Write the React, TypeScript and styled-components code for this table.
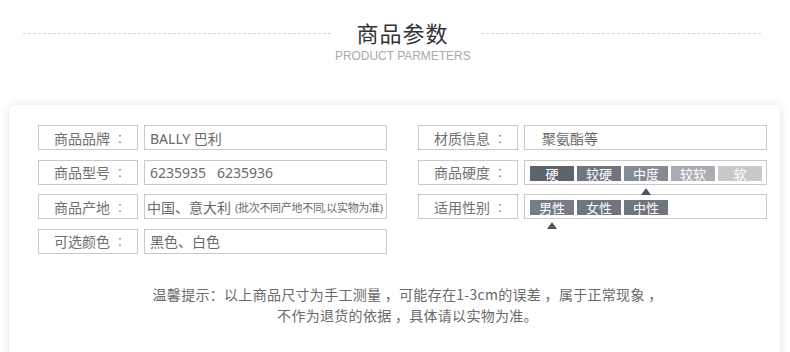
import styled, { createGlobalStyle } from "styled-components";

const GlobalStyle = createGlobalStyle`
  body {
    margin: 0;
    background: #ffffff;
    font-family: "Noto Sans", "Noto Sans CJK SC", sans-serif;
    color: #666;
  }
`;

const Page = styled.div`
  width: 790px;
  height: 352px;
  overflow: hidden;
  padding-top: 19px;
  box-sizing: border-box;
`;

const Header = styled.header`
  display: grid;
  grid-template-columns: 308px 150px 280px;
  margin-left: 23px;
  align-items: start;
`;

const Rule = styled.div`
  margin-top: 14px;
  border-top: 1px dashed #d4d4d4;
`;

const TitleBlock = styled.div`
  display: flex;
  flex-direction: column;
  align-items: center;
  margin-left: -7px;
`;

const Title = styled.h2`
  margin: 0;
  font-family: "Noto Sans CJK SC", sans-serif;
  font-weight: 400;
  font-size: 22px;
  line-height: 26px;
  letter-spacing: 1px;
  color: #333;
`;

const Subtitle = styled.div`
  margin-top: 3px;
  font-family: "Liberation Sans", sans-serif;
  font-size: 13px;
  line-height: 15px;
  color: #aaa;
  transform: scaleX(0.92);
`;

const Card = styled.section`
  margin: 42px 10px 0 9px;
  min-height: 270px;
  border-radius: 6px;
  background: #fff;
  box-shadow: 0 0 10px rgba(0, 0, 0, 0.12);
  padding: 20px 13px 0 29px;
  box-sizing: border-box;
`;

const Grid = styled.div`
  display: grid;
  grid-template-columns: 349px 349px;
  column-gap: 31px;
`;

const Column = styled.div`
  display: flex;
  flex-direction: column;
  gap: 9.5px;
`;

const Row = styled.div`
  display: flex;
  gap: 6px;
  height: 25px;
`;

const Label = styled.div`
  width: 100px;
  flex: none;
  box-sizing: border-box;
  border: 1px solid #c9c9c9;
  display: flex;
  align-items: center;
  justify-content: center;
  font-family: "Noto Sans CJK SC", sans-serif;
  font-size: 14px;
  color: #707070;
`;

const Colon = styled.span`
  margin-left: 8px;
  font-family: "Liberation Sans", sans-serif;
`;

const Value = styled.div<{ $indent?: number }>`
  flex: 1;
  box-sizing: border-box;
  border: 1px solid #c9c9c9;
  display: flex;
  align-items: center;
  padding-left: ${(p) => p.$indent ?? 5}px;
  font-family: "Noto Sans", "Noto Sans CJK SC", sans-serif;
  font-size: 14px;
  color: #6a6a6a;
  white-space: nowrap;
`;

const Small = styled.span`
  font-size: 11px;
  letter-spacing: -0.3px;
  margin-left: 4px;
`;

const Scale = styled.div`
  flex: 1;
  box-sizing: border-box;
  border: 1px solid #c9c9c9;
  display: flex;
  align-items: flex-start;
  gap: 3px;
  padding: 5px 0 0 5px;
`;

const Step = styled.div<{ $bg: string }>`
  position: relative;
  width: 44px;
  height: 15px;
  background: ${(p) => p.$bg};
  color: #fff;
  font-family: "Noto Sans CJK SC", sans-serif;
  font-size: 13px;
  line-height: 15px;
  text-align: center;
`;

const Marker = styled.span`
  position: absolute;
  left: 50%;
  top: 22px;
  margin-left: -5px;
  width: 0;
  height: 0;
  border-left: 5px solid transparent;
  border-right: 5px solid transparent;
  border-bottom: 7px solid #4e5560;
`;

const Note = styled.p`
  margin: 30px 0 0;
  padding-left: 10px;
  text-align: center;
  font-family: "Noto Sans CJK SC", sans-serif;
  font-size: 14px;
  line-height: 21px;
  letter-spacing: 0.3px;
  color: #6a6a6a;
`;

const hardness = [
  { name: "硬", bg: "#5d646e" },
  { name: "较硬", bg: "#6f7680" },
  { name: "中度", bg: "#858b94", active: true },
  { name: "较软", bg: "#a9acb3" },
  { name: "软", bg: "#c9c9c9" },
];

const genders = [
  { name: "男性", bg: "#767d87", active: true },
  { name: "女性", bg: "#6f7680" },
  { name: "中性", bg: "#6f7680" },
];

const Field = ({ children }: { children: string }) => (
  <Label>
    {children}
    <Colon>:</Colon>
  </Label>
);

export default function App() {
  return (
    <Page>
      <GlobalStyle />
      <Header>
        <Rule />
        <TitleBlock>
          <Title>商品参数</Title>
          <Subtitle>PRODUCT PARMETERS</Subtitle>
        </TitleBlock>
        <Rule />
      </Header>

      <Card>
        <Grid>
          <Column>
            <Row>
              <Field>商品品牌</Field>
              <Value>BALLY 巴利</Value>
            </Row>
            <Row>
              <Field>商品型号</Field>
              <Value>6235935&nbsp;&nbsp; 6235936</Value>
            </Row>
            <Row>
              <Field>商品产地</Field>
              <Value $indent={2}>
                中国、意大利<Small>(批次不同产地不同,以实物为准)</Small>
              </Value>
            </Row>
            <Row>
              <Field>可选颜色</Field>
              <Value>黑色、白色</Value>
            </Row>
          </Column>

          <Column>
            <Row>
              <Field>材质信息</Field>
              <Value $indent={17}>聚氨酯等</Value>
            </Row>
            <Row>
              <Field>商品硬度</Field>
              <Scale>
                {hardness.map((h) => (
                  <Step key={h.name} $bg={h.bg}>
                    {h.name}
                    {h.active && <Marker />}
                  </Step>
                ))}
              </Scale>
            </Row>
            <Row>
              <Field>适用性别</Field>
              <Scale>
                {genders.map((g) => (
                  <Step key={g.name} $bg={g.bg}>
                    {g.name}
                    {g.active && <Marker />}
                  </Step>
                ))}
              </Scale>
            </Row>
          </Column>
        </Grid>

        <Note>
          温馨提示：以上商品尺寸为手工测量 ，可能存在1-3cm的误差 ，属于正常现象 ，
          <br />
          不作为退货的依据 ，具体请以实物为准。
        </Note>
      </Card>
    </Page>
  );
}
